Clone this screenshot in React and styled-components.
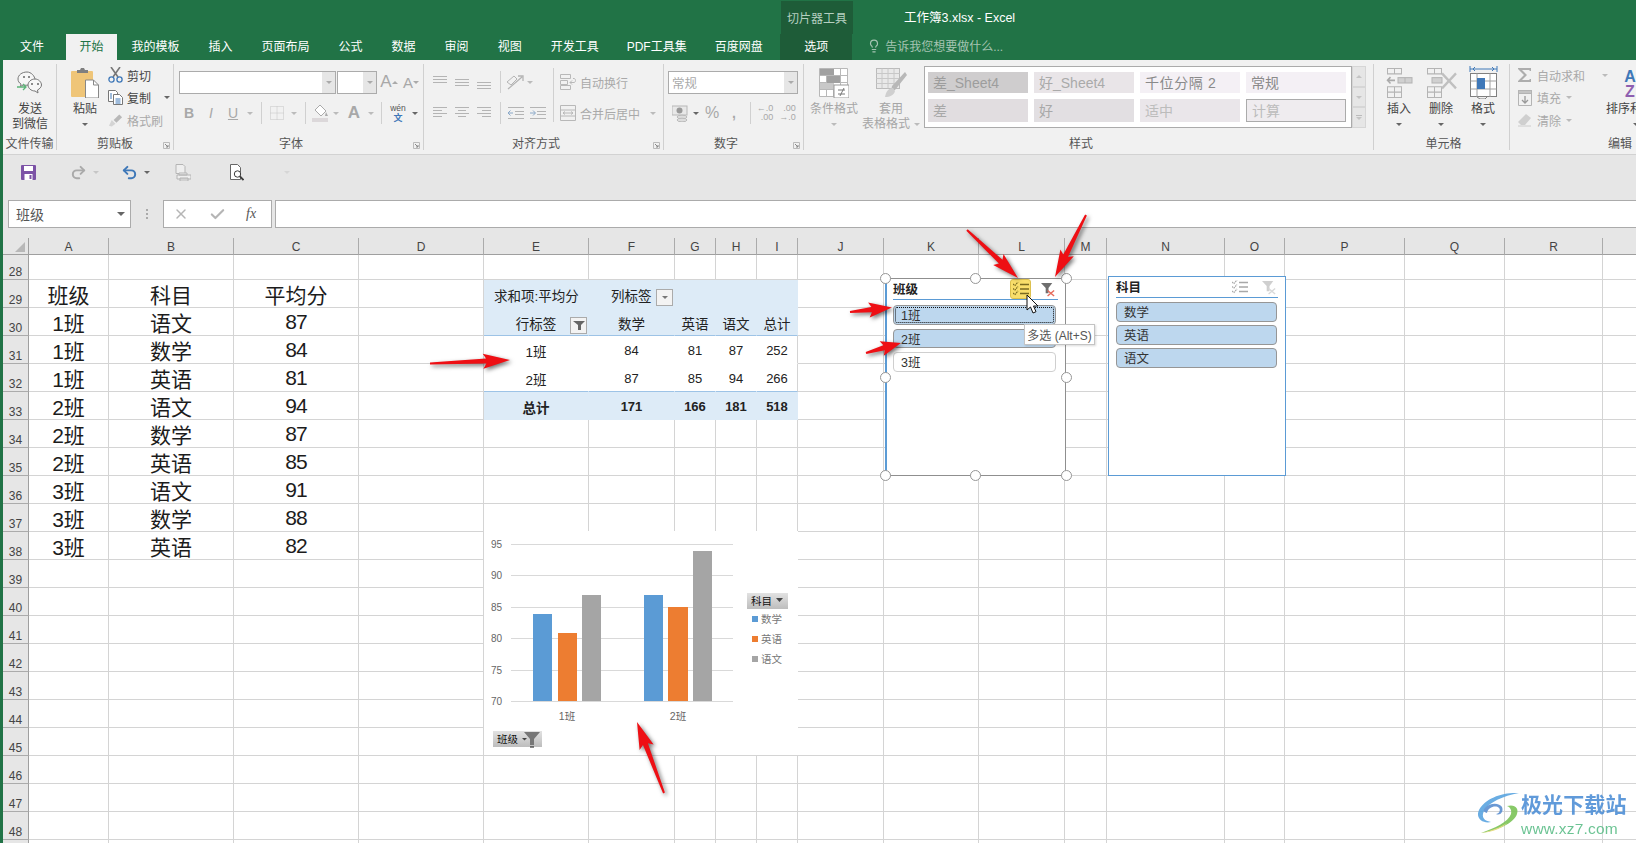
import React from 'react';
import styled, { createGlobalStyle } from 'styled-components';
import { Undo2, Redo2, X, Check, Lightbulb } from 'lucide-react';

const Global = createGlobalStyle`
  html, body { margin: 0; padding: 0; overflow: hidden; background: #fff; }
  * { box-sizing: border-box; }
  body { font-family: "Liberation Sans", "Noto Sans CJK SC", sans-serif; font-size: 12px; color: #444; }
`;

const Root = styled.div`
  position: relative; width: 1636px; height: 843px; overflow: hidden;
  padding-left: 3px; background: #217346;
`;
const TitleBar = styled.header`height: 60px; margin-left: -3px; padding-left: 3px; background: #217346; color: #fff;`;
const TitleRow = styled.div`display: flex; height: 34px; padding-top: 1px;`;
const ContextLabel = styled.div`
  margin-left: 778px; width: 72px; background: #1e5c38; color: #b5cfc0;
  display: flex; align-items: center; justify-content: center; padding-bottom: 1px;
`;
const DocTitle = styled.div`margin-left: 51px; display: flex; align-items: center; color: #fff; font-size: 12.5px; white-space: nowrap; padding-bottom: 2px;`;
const TabRow = styled.nav`display: flex; height: 26px;`;
const Tab = styled.div`
  display: flex; align-items: center; white-space: nowrap; padding: 0 ${p => (p.$active ? 13.5 : p.$pad || 14.5)}px 3px;
  color: ${p => (p.$active ? '#217346' : '#fff')};
  background: ${p => (p.$active ? '#f1f1f1' : 'transparent')};
`;
const FileTab = styled(Tab)`padding: 0 22px 3px 17px;`;
const ContextTab = styled(Tab)`margin-left: 3px; padding: 0 24px 3px; background: #1e5c38;`;
const TellMe = styled.div`margin-left: 15px; display: flex; align-items: center; gap: 4px; color: #a5c4b2; white-space: nowrap; padding-bottom: 3px;`;

const Ribbon = styled.section`display: flex; height: 95px; background: #f1f1f1; border-bottom: 1px solid #d2d2d2; padding-top: 4px; overflow: hidden;`;
const Group = styled.div`
  position: relative; flex: none; width: ${p => p.$w}px; height: 86px; display: flex; flex-direction: column;
  border-right: ${p => (p.$last ? 'none' : '1px solid #d0d0d0')};
`;
const GroupBody = styled.div`display: flex; height: 70px; padding-left: ${p => p.$pl || 0}px;`;
const GroupLabel = styled.div`
  height: 16px; display: flex; align-items: center; justify-content: center; color: #555; white-space: nowrap;
  padding: 0 ${p => p.$pr || 0}px 0 ${p => p.$pl || 0}px;
`;
const Launcher = styled.svg`position: absolute; right: 3px; bottom: 1px; width: 7px; height: 7px;`;

const BigBtn = styled.div`
  flex: none; width: ${p => p.$w}px; padding-top: 2px; display: flex; flex-direction: column; align-items: center;
  color: ${p => (p.$off ? '#a6a6a6' : '#444')}; line-height: 15px; white-space: nowrap;
`;
const IconSlot = styled.div`height: 36px; padding-bottom: 3px; display: flex; align-items: center; justify-content: center;`;
const BigLine = styled.div`height: 15px; display: flex; align-items: center; gap: 4px;`;
const Caret = styled.span`
  flex: none; display: inline-block; width: 0; height: 0;
  border-left: ${p => p.$s || 3}px solid transparent; border-right: ${p => p.$s || 3}px solid transparent;
  border-top: ${p => p.$s || 3}px solid ${p => p.$c || '#666'};
`;
const CaretUp = styled(Caret)`border-top: none; border-bottom: ${p => p.$s || 3}px solid ${p => p.$c || '#666'};`;
const SmallCol = styled.div`flex: none; width: ${p => p.$w}px; margin-left: ${p => p.$ml || 0}px; display: flex; flex-direction: column;`;
const SmallRow = styled.div`
  height: 22.5px; display: flex; align-items: center; gap: ${p => p.$gap || 4}px; white-space: nowrap;
  color: ${p => (p.$off ? '#a9a9a9' : '#444')};
`;
const IcoBox = styled.span`flex: none; width: 15px; display: inline-flex; justify-content: center;`;
const Spacer = styled.span`flex: none; width: ${p => p.$w}px;`;

const ToolStack = styled.div`display: flex; flex-direction: column; gap: 9px; padding-top: 7px;`;
const ToolRow = styled.div`display: flex; align-items: center; height: 22px; white-space: nowrap; margin-left: ${p => p.$ml || 0}px;`;
const Tool = styled.span`
  flex: none; width: ${p => p.$w}px; display: inline-flex; align-items: center; justify-content: center;
  color: #a8a8a8; font-size: ${p => p.$fs || 13}px; font-weight: ${p => (p.$b ? 700 : 400)}; font-style: ${p => (p.$i ? 'italic' : 'normal')};
  text-decoration: ${p => (p.$u ? 'underline' : 'none')};
`;
const Stacked = styled.span`display: flex; flex-direction: column; align-items: flex-end; line-height: 9px; font-size: 9px; color: #a8a8a8;`;
const Sep = styled.span`flex: none; width: ${p => p.$w || 10}px; height: 22px; display: flex; justify-content: center;
  &::after { content: ''; width: 1px; background: #d0d0d0; }`;
const FullSep = styled.div`flex: none; width: 8px; margin-top: 4px; height: 54px; display: flex; justify-content: center;
  &::after { content: ''; width: 1px; background: #d0d0d0; }`;
const Combo = styled.div`
  flex: none; width: ${p => p.$w}px; height: 23px; background: #fff; border: 1px solid #ababab; display: flex;
  margin-right: ${p => p.$mr || 0}px; color: #aaa; font-size: 12.5px;
`;
const ComboText = styled.div`flex: 1; padding-left: 3px; display: flex; align-items: center;`;
const ComboDrop = styled.div`width: 13px; background: #e6e6e6; display: flex; align-items: center; justify-content: center;`;
const WideText = styled.span`font-size: 12px; color: #a9a9a9; margin-left: 4px;`;

const Gallery = styled.div`
  flex: none; width: 428px; height: 62px; margin: 2px 0 0 4px; background: #fff; border: 1px solid #ababab;
  display: grid; grid-template-columns: repeat(4, 100px); gap: 6px; padding: 5px 3px; 
`;
const Style = styled.div`
  background: ${p => p.$bg}; color: ${p => p.$c}; font-size: 14px; padding-left: 5px; display: flex; align-items: center;
  white-space: nowrap; border: ${p => (p.$box ? '1px solid #ababab' : 'none')}; letter-spacing: ${p => (p.$sp ? '0.6px' : 0)};
  padding-bottom: 1px;
`;
const GalleryScroll = styled.div`flex: none; width: 14px; height: 62px; margin-top: 2px; display: flex; flex-direction: column;`;
const ScrollBtn = styled.div`flex: 1; background: #e6e6e6; border: 1px solid #d6d6d6; display: flex; align-items: center; justify-content: center; gap: 1px; flex-direction: column;`;
const Bar = styled.i`display: block; width: 6px; height: 1px; background: #bbb;`;

const Qat = styled.div`height: 45px; background: #e6e6e6; display: flex; align-items: center; padding-bottom: 10px;`;
const QatBtn = styled.span`flex: none; margin-left: ${p => p.$ml}px; display: inline-flex; align-items: center; color: ${p => p.$c || '#aaa'};`;

const FormulaArea = styled.div`height: 38px; background: #e6e6e6; display: flex; align-items: flex-start; padding-left: 5px;`;
const NameBox = styled.div`
  flex: none; width: 123px; height: 28px; background: #fff; border: 1px solid #ababab; display: flex; align-items: center;
  justify-content: space-between; padding: 0 5px 0 7px; font-size: 14px; color: #555;
`;
const Dots = styled.div`flex: none; width: 32px; height: 28px; display: flex; flex-direction: column; gap: 2px; align-items: center; justify-content: center;`;
const Dot = styled.i`width: 2px; height: 2px; background: #aaa; display: block;`;
const FxBox = styled.div`
  flex: none; width: 109px; height: 28px; background: #fff; border: 1px solid #ababab; display: flex; align-items: center; gap: 20px;
  color: #b5b5b5; padding: 0 0 0 9px;
`;
const FxText = styled.span`font-family: "Liberation Serif", serif; font-style: italic; color: #555; font-size: 14px;`;
const FormulaInput = styled.div`flex: 1; height: 28px; margin-left: 3px; background: #fff; border: 1px solid #ababab; border-right: none;`;

const Sheet = styled.div`
  display: grid; background: #fff; margin-left: 0; height: 605px; width: 1660px; overflow: hidden;
  grid-template-columns: 26px ${p => p.$cols};
  grid-template-rows: 17px 25px repeat(21, 28px);
`;
const Corner = styled.div`background: #e6e6e6; border-right: 1px solid #9f9f9f; border-bottom: 1px solid #9f9f9f; display: flex; align-items: flex-end; justify-content: flex-end; padding: 0 3px 2px 0;`;
const ColHead = styled.div`
  background: #e6e6e6; border-right: 1px solid #ababab; border-bottom: 1px solid #9f9f9f; color: #444;
  display: flex; align-items: flex-end; justify-content: center; line-height: 13px;
`;
const RowHead = styled.div`
  background: #e6e6e6; border-right: 1px solid #9f9f9f; border-bottom: 1px solid #ababab; color: #444;
  display: flex; align-items: flex-end; justify-content: center; line-height: 13px;
`;
const pivotBg = { head: '#ddebf7', total: '#ddebf7', body: '#fff' };
const Cell = styled.div`
  position: relative; min-width: 0; display: flex; align-items: center; white-space: nowrap;
  justify-content: ${p => (p.$left != null ? 'flex-start' : 'center')};
  padding-left: ${p => p.$left || 0}px;
  background: ${p => (p.$pivot ? pivotBg[p.$pivot] : '#fff')};
  border-right: 1px solid ${p => (p.$pivot && !p.$edge ? pivotBg[p.$pivot] : (p.$pivot === 'head' || p.$pivot === 'total' ? pivotBg[p.$pivot] : '#d4d4d4'))};
  border-bottom: 1px solid ${p => (p.$rule ? '#9dc3e6' : (p.$pivot ? pivotBg[p.$pivot] : '#d4d4d4'))};
  font-size: ${p => (p.$pivot ? '13.5px' : '21px')};
  font-weight: ${p => (p.$bold ? 700 : 400)};
  color: ${p => (p.$pivot ? '#222' : '#1c1c1c')};
  padding-top: ${p => (p.$pivot ? '2px' : '0')};
`;
const Digits = styled.span`letter-spacing: -1px;`;
const PivotDigits = styled.span`font-size: 13px;`;
const PivotButton = styled.div`
  position: absolute; right: 1px; top: 9px; width: 17px; height: 17px; background: #f3f3f3; border: 1px solid #ababab;
  display: flex; align-items: center; justify-content: center;
`;

const ChartBox = styled.svg`position: absolute; left: 484px; top: 531px; width: 314px; height: 224px; background: #fff; display: block;`;

const Slicer = styled.div`
  position: absolute; left: ${p => p.$x}px; top: ${p => p.$y}px; width: ${p => p.$w}px; height: ${p => p.$h}px;
  background: #fff; padding: 0 7px 0 ${p => (p.$sel ? 6 : 7)}px; display: flex; flex-direction: column;
  border: 1px solid ${p => (p.$sel ? '#8f8f8f' : '#5b9bd5')};
  border-left-color: #5b9bd5; border-left-width: ${p => (p.$sel ? 2 : 1)}px;
`;
const SlicerHead = styled.div`
  height: ${p => p.$h}px; flex: none; display: flex; align-items: center; border-bottom: 1.5px solid #5b9bd5;
  font-size: 12.5px; font-weight: 700; color: #222;
`;
const SlicerTitle = styled.span`flex: 1; padding-bottom: 2px;`;
const HeadBtn = styled.span`
  flex: none; width: ${p => p.$w}px; height: ${p => p.$hh}px; display: flex; align-items: center; justify-content: center;
  margin-right: ${p => p.$mr || 0}px; border-radius: 3px; background: ${p => (p.$on ? '#f9de6a' : 'transparent')};
  border: ${p => (p.$on ? '1px solid #dcc04f' : 'none')};
`;
const SlicerItems = styled.div`display: flex; flex-direction: column; gap: ${p => p.$gap}px; margin-top: ${p => p.$mt}px; margin-right: ${p => p.$mr}px;`;
const SlicerItem = styled.div`
  position: relative; height: 19.5px; border-radius: 4px; padding-left: 7px; display: flex; align-items: center; font-size: 12.5px; color: #333;
  background: ${p => (p.$on ? '#bdd7ee' : '#fff')}; border: 1px solid ${p => (p.$on ? '#969696' : '#cfcfcf')};
`;
const FocusRing = styled.i`position: absolute; inset: 1px; border: 1px dotted #111; border-radius: 2px;`;
const Handle = styled.i`
  position: absolute; left: ${p => p.$x - 5.5}px; top: ${p => p.$y - 5.5}px; width: 11px; height: 11px; border-radius: 50%;
  background: #fff; border: 1.5px solid #969696; display: block;
`;
const Tip = styled.div`
  position: absolute; left: 1024px; top: 324px; width: 71px; height: 21px; background: #fff; border: 1px solid #c4c4c4;
  box-shadow: 1px 1px 2px rgba(0,0,0,.15); display: flex; align-items: center; justify-content: center; font-size: 12px; color: #555; white-space: nowrap;
`;
const Overlay = styled.svg`position: absolute; left: 0; top: 0; width: 1636px; height: 843px; pointer-events: none; filter: drop-shadow(2px 2px 2px rgba(0,0,0,.55));`;
const CursorSvg = styled.svg`position: absolute; left: 1026px; top: 294px; width: 14px; height: 20px;`;
const Mark = styled.div`position: absolute; left: 1477px; top: 792px; display: flex; gap: 1px; opacity: .9;`;
const MarkText = styled.div`display: flex; flex-direction: column;`;
const MarkName = styled.div`font-size: 21px; font-weight: 700; color: #4f90d6; line-height: 26px; letter-spacing: .1px; white-space: nowrap;`;
const MarkUrl = styled.div`font-size: 15.5px; color: #5cbd88; line-height: 18px; margin-top: 2px; white-space: nowrap; letter-spacing: .2px;`;

/* ---------- drawings ---------- */
const g = '#b4b4b4';
const Launch = () => (
  <Launcher viewBox="0 0 7 7"><path d="M.5.5h6v6h-6z" fill="none" stroke="#bbb" /><path d="M2 2l3 3M5 3v2H3" fill="none" stroke="#888" /></Launcher>
);
const Wechat = () => (
  <svg width="28" height="24" viewBox="0 0 28 24" fill="#f6f6f6" stroke="#777">
    <path d="M11 1c-5 0-9 3-9 7 0 2 1 4 3 5l-.5 2.500L7 14c5 1 11-1 12-5 0-4-4-8-8-8z" />
    <path d="M19 8c-4 0-7 3-7 6s3 6 7 6l3 2-.5-3c2-1 4-3 4-5 0-3-3-6-6.500-6z" />
    <g fill="#666" stroke="none"><circle cx="8" cy="6" r="1" /><circle cx="13" cy="6" r="1" /><circle cx="16" cy="13" r="1" /><circle cx="22" cy="13" r="1" /></g>
    <path d="M1 16h9M7 13l3 3-3 3" fill="none" stroke="#5cb478" strokeWidth="1.300" />
  </svg>
);
const Paste = () => (
  <svg width="29" height="31" viewBox="0 0 29 31">
    <rect x="0" y="4" width="22" height="26" rx="1" fill="#efc578" />
    <path d="M6 6V3h3l1-2h3l1 2h3v3z" fill="#7f7f7f" />
    <path d="M14.500 13h8l5 5v13h-13z" fill="#fff" stroke="#888" />
    <path d="M22.500 13v5h5" fill="none" stroke="#888" />
  </svg>
);
const Scissor = () => (
  <svg width="15" height="16" viewBox="0 0 15 16" fill="none">
    <path d="M3 0l7 10M12 0L5 10" stroke="#777" strokeWidth="1.600" />
    <circle cx="3.500" cy="12.500" r="2.600" stroke="#3f78b8" strokeWidth="1.300" /><circle cx="11.500" cy="12.500" r="2.600" stroke="#3f78b8" strokeWidth="1.300" />
  </svg>
);
const CopyIco = () => (
  <svg width="15" height="15" viewBox="0 0 15 15" fill="#fff" stroke="#777">
    <path d="M.5.5h7l2 2v9h-9z" /><path d="M5.500 4.500h6l3 3v7h-9z" />
    <path d="M2 4h2M2 6h2M2 8h2M7.500 9h5M7.500 11h5M7.500 13h5" stroke="#3f78b8" fill="none" />
  </svg>
);
const Brush = () => (
  <svg width="16" height="15" viewBox="0 0 16 15"><path d="M1 13l3-6 4 4-4 3z" fill="#d4d4d4" /><path d="M6 7l6-6 3 3-6 6z" fill="#b8b8b8" /></svg>
);
const GridIco = ({ w = 30, h = 30, cols = 4, rows = 4, c = '#b8b8b8', children }) => {
  const cw = w / cols; const rh = h / rows; const d = [];
  for (let i = 0; i <= cols; i += 1) d.push(`M${i * cw + 0.5} .5V${h + 0.5}`);
  for (let i = 0; i <= rows; i += 1) d.push(`M.5 ${i * rh + 0.5}H${w + 0.5}`);
  return <svg width={w + 2} height={h + 2} viewBox={`0 0 ${w + 2} ${h + 2}`}><rect x=".5" y=".5" width={w} height={h} fill="#fff" /><path d={d.join('')} stroke={c} fill="none" />{children}</svg>;
};
const CondFmt = () => (
  <GridIco w={28} h={28} cols={4} rows={4}>
    <rect x="1" y="1" width="14" height="6" fill="#a0a0a0" /><rect x="8" y="8" width="13" height="7" fill="#a0a0a0" /><rect x="1" y="15" width="14" height="6" fill="#c8c8c8" />
    <rect x="15" y="17" width="15" height="13" fill="#fff" stroke="#999" /><path d="M19 22h7M19 26h7M25 20l-4 8" stroke="#777" fill="none" />
  </GridIco>
);
const TableFmt = () => (
  <svg width="31" height="31" viewBox="0 0 31 31">
    <g transform="translate(0 1)"><rect x=".5" y=".5" width="23" height="20" fill="#e9e9e9" stroke="#bbb" />
      <path d="M6 .5v20M12 .5v20M18 .5v20M.5 5.500h23M.5 10.500h23M.5 15.500h23" stroke="#c8c8c8" fill="none" /></g>
    <path d="M29 5l2 3-12 15-4 1 1-5z" fill="#b8b8b8" /><path d="M9 30c1-6 4-9 8-9l2 3c-1 4-5 6-10 6z" fill="#cfcfcf" />
  </svg>
);
const InsertIco = () => (
  <svg width="27" height="30" viewBox="0 0 27 28" preserveAspectRatio="none" fill="none" stroke="#b4b4b4">
    <path d="M1.500.5h14v5h-14zM8.500.500v5M1.500 17.500h14v10h-14zM8.500 17.500v10M1.500 22.500h14" />
    <rect x="12" y="9" width="14" height="5" fill="#d0d0d0" /><path d="M19 9v5" />
    <path d="M9 11.500H2M4.500 8.500l-3 3 3 3" strokeWidth="1.500" stroke="#aaa" />
  </svg>
);
const DeleteIco = () => (
  <svg width="31" height="30" viewBox="0 0 31 28" preserveAspectRatio="none" fill="none" stroke="#b4b4b4">
    <path d="M1.500.5h14v5h-14zM8.500.500v5M1.500 17.500h14v10h-14zM8.500 17.500v10M1.500 22.500h14" />
    <rect x="6" y="9" width="10" height="5" fill="#d0d0d0" />
    <path d="M16 5l14 14M30 5L16 19" strokeWidth="2.400" stroke="#c0c0c0" />
  </svg>
);
const FormatIco = () => (
  <svg width="29" height="33" viewBox="0 0 29 33" fill="none">
    <path d="M1 3h27M1 0v6M28 0v6M6 1L4 3l2 2M23 1l2 2-2 2" stroke="#3f78b8" />
    <rect x="1.500" y="7.500" width="26" height="23" fill="#fff" stroke="#808080" />
    <path d="M1.500 15h26M1.500 23h26M8 7.500V31M21 7.500V31" stroke="#a0a0a0" />
    <rect x="8" y="12" width="8" height="11" fill="#3f78b8" />
    <path d="M8 31l3 2h5l2-2" stroke="#808080" />
  </svg>
);
const Lines = ({ list, w = 15, h = 14, c = g }) => (
  <svg width={w} height={h} viewBox={`0 0 ${w} ${h}`}>{list.map(([a, b, y]) => <path key={`${a}-${y}`} d={`M${a} ${y + 0.5}H${b}`} stroke={c} />)}</svg>
);
const Orientation = () => (
  <svg width="20" height="18" viewBox="0 0 20 18" fill="none" stroke="#b4b4b4"><path d="M2 9l7-6 3 3-6 6zM8 12l4-4" /><path d="M3 16L17 4M13 3h5v5" strokeWidth="1.300" /></svg>
);
const Indent = ({ flip }) => (
  <svg width="16" height="12" viewBox="0 0 16 12" fill="none" stroke="#b4b4b4">
    <path d="M0 .5h16M7 4.500h9M7 7.500h9M0 11.500h16" />
    <path d={flip ? 'M0 6h5M3 3.500L5.500 6 3 8.500' : 'M5 6H0M2.500 3.500L0 6l2.500 2.500'} stroke="#8aa8c8" />
  </svg>
);
const WrapIco = () => (
  <svg width="16" height="16" viewBox="0 0 16 16" fill="none" stroke="#b8b8b8"><path d="M.5.5h10v4h-10zM.5 6.500h7v4h-7zM.5 11.500h10v4h-10zM10 8.500h4c2 0 2-4 0-4h-1" /><path d="M12 6.500l-2 2 2 2" /></svg>
);
const MergeIco = () => (
  <svg width="16" height="16" viewBox="0 0 16 16" fill="none" stroke="#b8b8b8"><path d="M.5.5h15v15H.5zM.5 5h15M.5 11h15M3 8h10M5 6.500L3 8l2 1.500M11 6.500L13 8l-2 1.500" /></svg>
);
const Currency = () => (
  <svg width="16" height="17" viewBox="0 0 16 17"><rect x="0" y="1" width="15" height="9" fill="#e8e8e8" stroke="#b8b8b8" /><circle cx="7.500" cy="5.500" r="3" fill="#999" /><ellipse cx="10" cy="12" rx="5" ry="1.800" fill="#ddd" stroke="#bbb" /><ellipse cx="10" cy="15" rx="5" ry="1.800" fill="#ddd" stroke="#bbb" /></svg>
);
const BorderIco = () => (
  <svg width="14" height="14" viewBox="0 0 14 14" fill="none" stroke="#c4c4c4" strokeDasharray="1 1"><path d="M.5.5h13v13H.5zM7 .5v13M.5 7h13" /></svg>
);
const FillIco = () => (
  <svg width="17" height="19" viewBox="0 0 17 19"><path d="M8 1l6 6-5 5-6-6z" fill="#fff" stroke="#aaa" /><path d="M14 8l2 4h-3z" fill="#aaa" /><rect x="0" y="14" width="16" height="4" fill="#dcd8da" /></svg>
);
const SaveIco = () => (
  <svg width="15" height="15" viewBox="0 0 15 15"><rect width="15" height="15" rx="1" fill="#7c52a6" /><rect x="3" y="1" width="9" height="5" fill="#fff" /><rect x="3.500" y="9" width="8" height="6" fill="#fff" /><rect x="8.500" y="10" width="2" height="4" fill="#7c52a6" /></svg>
);
const PrintIco = () => (
  <svg width="16" height="17" viewBox="0 0 16 17" fill="#eee" stroke="#b4b4b4"><path d="M1 .5h7l2 2v7H1z" /><path d="M4 9h8v2H4zM2 11h14v4H2zM5 14h8v3H5z" /></svg>
);
const PreviewIco = () => (
  <svg width="14" height="17" viewBox="0 0 14 17" fill="#fff" stroke="#666"><path d="M.5.5h7l3 3v12H.500z" /><circle cx="7.500" cy="10" r="3.200" stroke="#3d3d3d" /><path d="M10 12.500l3.500 3.500" strokeWidth="1.800" stroke="#3d3d3d" /></svg>
);
const Check3 = ({ c = '#777' }) => (
  <svg width="16" height="14" viewBox="0 0 16 14" fill="none" stroke={c}>
    <path d="M7 2.500h9M7 7h9M7 11.500h9" strokeWidth="1.300" />
    <path d="M0 2l2 1.500L5 0M0 6.500L2 8l3-3.500M0 11l2 1.500L5 9" strokeDasharray="1.500 .7" strokeWidth="1.200" />
  </svg>
);
const ClearFilter = ({ dim }) => (
  <svg width="15" height="15" viewBox="0 0 16 16">
    <path d="M0 1h12L8 6.500V12H5V6.500z" fill={dim ? '#cfcfcf' : '#6e6e6e'} />
    <path d="M7 9l7 6M14 9l-7 6" stroke={dim ? '#d9d9d9' : '#e66a5a'} strokeWidth="1.500" />
  </svg>
);
const Funnel = () => (
  <svg width="12" height="11" viewBox="0 0 12 11"><path d="M0 1h12L8 5v5H5V5z" fill="#666" /></svg>
);
const Arrow = ({ from: [x1, y1], to: [x2, y2] }) => {
  const dx = x2 - x1; const dy = y2 - y1; const l = Math.hypot(dx, dy);
  const ux = dx / l; const uy = dy / l; const nx = -uy; const ny = ux;
  const P = (back, side) => `${(x2 - ux * back + nx * side).toFixed(1)},${(y2 - uy * back + ny * side).toFixed(1)}`;
  const head = Math.min(27, l * 0.55);
  const pts = [P(l, 1), P(head * 0.88, 2.6), P(head, 7.5), P(0, 0), P(head, -7.5), P(head * 0.88, -2.6), P(l, -1)];
  return <polygon points={pts.join(' ')} fill="#ee0f14" />;
};
function WenIcon() {
  return (
    <svg width="20" height="20" viewBox="0 0 20 20">
      <text x="10" y="8" fontSize="8.500" fill="#555" textAnchor="middle">wén</text>
      <text x="10" y="18" fontSize="9" fontWeight="700" fill="#3f78b8" textAnchor="middle">文</text>
    </svg>
  );
}
function SigmaIcon() {
  return <svg width="15" height="16" viewBox="0 0 15 16"><path d="M1 1h13v3h-1l-1-1H5l5 5-5 5h7l1-1h1v3H1v-1l6-6-6-6z" fill="#adadad" /></svg>;
}
function FillDown() {
  return <svg width="14" height="16" viewBox="0 0 14 16" fill="none" stroke="#b4b4b4"><path d="M.5.5h13v15H.5z" /><rect x=".5" y=".5" width="13" height="3" fill="#c4c4c4" /><path d="M7 6v7M4 10l3 3 3-3" stroke="#999" strokeWidth="1.300" /></svg>;
}
function Eraser() {
  return <svg width="15" height="14" viewBox="0 0 15 14"><path d="M9 1l5 4-6 7H4L1 9z" fill="#cfcfcf" /><path d="M1 13h13" stroke="#ccc" /></svg>;
}
function SortIcon() {
  return (
    <svg width="30" height="30" viewBox="0 0 30 30">
      <text x="9" y="14" fontSize="16" fontWeight="700" fill="#3f78b8" textAnchor="middle">A</text>
      <text x="9" y="29" fontSize="16" fontWeight="700" fill="#8e5fb0" textAnchor="middle">Z</text>
      <path d="M16 6h12l-6 6z" fill="none" stroke="#777" />
    </svg>
  );
}

/* ---------- data ---------- */
const COLS = [['A', 80], ['B', 125], ['C', 125], ['D', 125], ['E', 105], ['F', 86], ['G', 41], ['H', 41], ['I', 41], ['J', 86], ['K', 95], ['L', 86], ['M', 42], ['N', 118], ['O', 60], ['P', 120], ['Q', 100], ['R', 98], ['S', 100]];
const ROWS = Array.from({ length: 22 }, (_, i) => 28 + i);
const TABLE = [['班级', '科目', '平均分'], ['1班', '语文', '87'], ['1班', '数学', '84'], ['1班', '英语', '81'], ['2班', '语文', '94'], ['2班', '数学', '87'], ['2班', '英语', '85'], ['3班', '语文', '91'], ['3班', '数学', '88'], ['3班', '英语', '82']];
const PIVOT = {
  29: { E: '求和项:平均分', F: '列标签' },
  30: { E: '行标签', F: '数学', G: '英语', H: '语文', I: '总计' },
  31: { E: '1班', F: '84', G: '81', H: '87', I: '252' },
  32: { E: '2班', F: '87', G: '85', H: '94', I: '266' },
  33: { E: '总计', F: '171', G: '166', H: '181', I: '518' },
};
const PIVOT_COLS = 'EFGHI';
const pivotKind = r => (r <= 30 ? 'head' : r === 33 ? 'total' : 'body');

const renderCell = (col, row) => {
  const key = `${col}${row}`;
  if (row >= 29 && row <= 33 && PIVOT_COLS.includes(col)) {
    const left = (row === 29 && col === 'E') ? 10 : (row === 29 && col === 'F') ? 22 : undefined;
    const value = PIVOT[row][col];
    return (
      <Cell key={key} $pivot={pivotKind(row)} $edge={col === 'I'} $rule={row === 30 || row === 32} $bold={row === 33} $left={left}>
        {/^\d+$/.test(value || '') ? <PivotDigits>{value}</PivotDigits> : value}
        {row === 29 && col === 'F' && <PivotButton><Caret $s={3.5} $c="#777" /></PivotButton>}
        {row === 30 && col === 'E' && <PivotButton><Funnel /></PivotButton>}
      </Cell>
    );
  }
  const idx = 'ABC'.indexOf(col);
  const text = idx >= 0 && row >= 29 && row <= 38 ? TABLE[row - 29][idx] : null;
  return <Cell key={key}>{text && (/^\d+$/.test(text) ? <Digits>{text}</Digits> : text)}</Cell>;
};

const Chart = () => {
  const ys = [[95, 544.5], [90, 575.5], [85, 607.5], [80, 638.5], [75, 670.5], [70, 701.5]];
  const bars = [[533, 19, 614, '#5b9bd5'], [558, 19, 633, '#ed7d31'], [582, 19, 595, '#a5a5a5'], [644, 19, 595, '#5b9bd5'], [668, 20, 607, '#ed7d31'], [693, 19, 551, '#a5a5a5']];
  const legend = [['数学', 619, '#5b9bd5'], ['英语', 639, '#ed7d31'], ['语文', 659, '#a5a5a5']];
  return (
    <ChartBox viewBox="484 531 314 224">
      <defs><linearGradient id="btn" x1="0" y1="0" x2="0" y2="1"><stop offset="0" stopColor="#e2e2e2" /><stop offset="1" stopColor="#bdbdbd" /></linearGradient></defs>
      {ys.map(([v, y]) => (
        <g key={v}><path d={`M511 ${y}H733`} stroke="#d9d9d9" /><text x="491" y={y + 3} fontSize="10" fill="#666">{v}</text></g>
      ))}
      {bars.map(([x, w, y, c]) => <rect key={x} x={x} y={y} width={w} height={701 - y} fill={c} />)}
      <text x="567" y="720" fontSize="10.500" fill="#666" textAnchor="middle">1班</text>
      <text x="678" y="720" fontSize="10.500" fill="#666" textAnchor="middle">2班</text>
      <rect x="747" y="593" width="41" height="16" fill="url(#btn)" />
      <text x="751" y="605" fontSize="10.500" fill="#111">科目</text>
      <path d="M776 598h7l-3.500 4z" fill="#444" />
      {legend.map(([t, y, c]) => (
        <g key={t}><rect x="752" y={y - 3} width="6" height="6" fill={c} /><text x="761" y={y + 4} fontSize="10.500" fill="#777">{t}</text></g>
      ))}
      <rect x="493" y="731" width="49" height="16" fill="url(#btn)" />
      <text x="497" y="743" fontSize="10.500" fill="#111">班级</text>
      <path d="M522 738h5l-2.500 2.500z" fill="#444" />
      <path d="M524 732h16l-6 7v6h-4v-6z" fill="#777" />
      <path d="M530 747h4" stroke="#111" />
    </ChartBox>
  );
};

const STYLES = [
  ['差_Sheet4', '#cfcdce', '#9d9d9d'], ['好_Sheet4', '#e9e5e8', '#aaa'], ['千位分隔 2', '#f4f0f5', '#8a8a8a', false, true], ['常规', '#f4f0f5', '#8a8a8a'],
  ['差', '#e1dde0', '#a8a8a8'], ['好', '#e2dfe2', '#a8a8a8'], ['适中', '#eae6ea', '#bcbcbc'], ['计算', '#efecef', '#bcbcbc', true],
];

export default function App() {
  return (
    <Root>
      <Global />
      <TitleBar>
        <TitleRow>
          <ContextLabel>切片器工具</ContextLabel>
          <DocTitle>工作簿3.xlsx - Excel</DocTitle>
        </TitleRow>
        <TabRow>
          <FileTab>文件</FileTab>
          <Tab $active>开始</Tab>
          {['我的模板', '插入', '页面布局', '公式', '数据', '审阅', '视图', '开发工具'].map(t => <Tab key={t}>{t}</Tab>)}
          <Tab $pad={13.5}>PDF工具集</Tab>
          <Tab>百度网盘</Tab>
          <ContextTab>选项</ContextTab>
          <TellMe><Lightbulb size={14} />告诉我您想要做什么...</TellMe>
        </TabRow>
      </TitleBar>

      <Ribbon>
        <Group $w={54}>
          <GroupBody>
            <BigBtn $w={54}><IconSlot><Wechat /></IconSlot><BigLine>发送</BigLine><BigLine>到微信</BigLine></BigBtn>
          </GroupBody>
          <GroupLabel>文件传输</GroupLabel>
        </Group>

        <Group $w={117}>
          <GroupBody $pl={8}>
            <BigBtn $w={40}><IconSlot><Paste /></IconSlot><BigLine>粘贴</BigLine><BigLine><Caret /></BigLine></BigBtn>
            <SmallCol $w={66} $ml={3}>
              <SmallRow><IcoBox><Scissor /></IcoBox>剪切</SmallRow>
              <SmallRow><IcoBox><CopyIco /></IcoBox>复制<Spacer $w={5} /><Caret /></SmallRow>
              <SmallRow $off><IcoBox><Brush /></IcoBox>格式刷</SmallRow>
            </SmallCol>
          </GroupBody>
          <GroupLabel>剪贴板</GroupLabel>
          <Launch />
        </Group>

        <Group $w={250}>
          <GroupBody $pl={4}>
            <ToolStack>
              <ToolRow $ml={1}>
                <Combo $w={157} $mr={1}><ComboText /><ComboDrop><Caret $c="#aaa" /></ComboDrop></Combo>
                <Combo $w={40}><ComboText /><ComboDrop><Caret $c="#aaa" /></ComboDrop></Combo>
                <Tool $w={24} $fs={17}>A<CaretUp $c="#aaa" /></Tool>
                <Tool $w={20} $fs={15}>A<Caret $c="#aaa" /></Tool>
              </ToolRow>
              <ToolRow>
                <Tool $w={22} $b $fs={14}>B</Tool><Tool $w={22} $i $fs={14}>I</Tool><Tool $w={22} $u $fs={14}>U</Tool>
                <Tool $w={12}><Caret $c="#bbb" /></Tool><Sep />
                <Tool $w={22}><BorderIco /></Tool><Tool $w={12}><Caret $c="#bbb" /></Tool><Sep />
                <Tool $w={20}><FillIco /></Tool><Tool $w={12}><Caret $c="#bbb" /></Tool>
                <Tool $w={24} $fs={17} $b>A</Tool><Tool $w={10}><Caret $c="#bbb" /></Tool><Sep />
                <Tool $w={24}><WenIcon /></Tool><Tool $w={10}><Caret /></Tool>
              </ToolRow>
            </ToolStack>
          </GroupBody>
          <GroupLabel $pr={15}>字体</GroupLabel>
          <Launch />
        </Group>

        <Group $w={240}>
          <GroupBody $pl={5}>
            <ToolStack>
              <ToolRow>
                <Tool $w={22}><Lines list={[[0, 14, 1], [0, 14, 4], [0, 14, 7]]} /></Tool>
                <Tool $w={22}><Lines list={[[0, 14, 4], [0, 14, 7], [0, 14, 10]]} /></Tool>
                <Tool $w={22}><Lines list={[[0, 14, 7], [0, 14, 10], [0, 14, 13]]} /></Tool>
                <Sep /><Tool $w={20}><Orientation /></Tool><Tool $w={10}><Caret $c="#bbb" /></Tool>
              </ToolRow>
              <ToolRow>
                <Tool $w={22}><Lines list={[[0, 14, 1], [0, 9, 4], [0, 14, 7], [0, 9, 10]]} /></Tool>
                <Tool $w={22}><Lines list={[[0, 14, 1], [3, 11, 4], [0, 14, 7], [3, 11, 10]]} /></Tool>
                <Tool $w={22}><Lines list={[[0, 14, 1], [5, 14, 4], [0, 14, 7], [5, 14, 10]]} /></Tool>
                <Sep /><Tool $w={22}><Indent /></Tool><Tool $w={22}><Indent flip /></Tool>
              </ToolRow>
            </ToolStack>
            <FullSep />
            <ToolStack>
              <ToolRow><Spacer $w={3} /><WrapIco /><WideText>自动换行</WideText></ToolRow>
              <ToolRow><Spacer $w={3} /><MergeIco /><WideText>合并后居中</WideText><Spacer $w={10} /><Caret $c="#bbb" /></ToolRow>
            </ToolStack>
          </GroupBody>
          <GroupLabel $pr={15}>对齐方式</GroupLabel>
          <Launch />
        </Group>

        <Group $w={140}>
          <GroupBody $pl={4}>
            <ToolStack>
              <ToolRow><Combo $w={130}><ComboText>常规</ComboText><ComboDrop><Caret $c="#aaa" /></ComboDrop></Combo></ToolRow>
              <ToolRow>
                <Tool $w={24}><Currency /></Tool><Tool $w={8}><Caret /></Tool><Tool $w={24} $fs={16}>%</Tool><Tool $w={20} $fs={14} $b>,</Tool>
                <Sep $w={12} />
                <Tool $w={18}><Stacked><span>←.0</span><span>.00</span></Stacked></Tool>
                <Tool $w={27}><Stacked><span>.00</span><span>→.0</span></Stacked></Tool>
              </ToolRow>
            </ToolStack>
          </GroupBody>
          <GroupLabel $pr={15}>数字</GroupLabel>
          <Launch />
        </Group>

        <Group $w={570}>
          <GroupBody $pl={2}>
            <BigBtn $w={56} $off><IconSlot><CondFmt /></IconSlot><BigLine>条件格式</BigLine><BigLine><Caret $c="#bbb" /></BigLine></BigBtn>
            <BigBtn $w={58} $off><IconSlot><TableFmt /></IconSlot><BigLine>套用</BigLine><BigLine>表格格式<Caret $c="#bbb" /></BigLine></BigBtn>
            <Gallery>
              {STYLES.map(([t, bg, c, box, sp]) => <Style key={t} $bg={bg} $c={c} $box={box} $sp={sp}>{t}</Style>)}
            </Gallery>
            <GalleryScroll>
              <ScrollBtn><CaretUp $c="#c4c4c4" /></ScrollBtn>
              <ScrollBtn><Caret $c="#c4c4c4" /></ScrollBtn>
              <ScrollBtn><Bar /><Caret $c="#c4c4c4" /></ScrollBtn>
            </GalleryScroll>
          </GroupBody>
          <GroupLabel $pr={15}>样式</GroupLabel>
        </Group>

        <Group $w={136}>
          <GroupBody $pl={4}>
            <BigBtn $w={42}><IconSlot><InsertIco /></IconSlot><BigLine>插入</BigLine><BigLine><Caret /></BigLine></BigBtn>
            <BigBtn $w={42}><IconSlot><DeleteIco /></IconSlot><BigLine>删除</BigLine><BigLine><Caret /></BigLine></BigBtn>
            <BigBtn $w={42}><IconSlot><FormatIco /></IconSlot><BigLine>格式</BigLine><BigLine><Caret /></BigLine></BigBtn>
          </GroupBody>
          <GroupLabel $pl={4}>单元格</GroupLabel>
        </Group>

        <Group $w={126} $last>
          <GroupBody $pl={7}>
            <SmallCol $w={89}>
              <SmallRow $off $gap={5}><IcoBox><SigmaIcon /></IcoBox>自动求和<Spacer $w={7} /><Caret $c="#bbb" /></SmallRow>
              <SmallRow $off $gap={5}><IcoBox><FillDown /></IcoBox>填充<Caret $c="#bbb" /></SmallRow>
              <SmallRow $off $gap={5}><IcoBox><Eraser /></IcoBox>清除<Caret $c="#bbb" /></SmallRow>
            </SmallCol>
            <BigBtn $w={60}><IconSlot><SortIcon /></IconSlot><BigLine>排序和筛选</BigLine><BigLine><Caret /></BigLine></BigBtn>
          </GroupBody>
          <GroupLabel $pl={94}>编辑</GroupLabel>
        </Group>
      </Ribbon>

      <Qat>
        <QatBtn $ml={18}><SaveIco /></QatBtn>
        <QatBtn $ml={34}><Redo2 size={17} strokeWidth={2.800} /></QatBtn>
        <QatBtn $ml={6}><Caret $c="#c6c6c6" /></QatBtn>
        <QatBtn $ml={22} $c="#3f78b8"><Undo2 size={17} strokeWidth={2.800} /></QatBtn>
        <QatBtn $ml={6}><Caret /></QatBtn>
        <QatBtn $ml={25}><PrintIco /></QatBtn>
        <QatBtn $ml={39}><PreviewIco /></QatBtn>
        <QatBtn $ml={40}><Caret $c="#d6d6d6" /></QatBtn>
      </Qat>

      <FormulaArea>
        <NameBox>班级<Caret $s={4} $c="#666" /></NameBox>
        <Dots><Dot /><Dot /><Dot /></Dots>
        <FxBox><X size={16} strokeWidth={2.200} /><Check size={17} strokeWidth={3} /><FxText>fx</FxText></FxBox>
        <FormulaInput />
      </FormulaArea>

      <Sheet $cols={COLS.map(c => `${c[1]}px`).join(' ')}>
        <Corner><svg width="10" height="10" viewBox="0 0 10 10"><path d="M10 0v10H0z" fill="#b8b8b8" /></svg></Corner>
        {COLS.map(([c]) => <ColHead key={c}>{c}</ColHead>)}
        {ROWS.map(r => (
          <React.Fragment key={r}>
            <RowHead>{r}</RowHead>
            {COLS.map(([c]) => renderCell(c, r))}
          </React.Fragment>
        ))}
      </Sheet>

      <Chart />

      <Slicer $sel $x={885} $y={278} $w={181} $h={198}>
        <SlicerHead $h={21}>
          <SlicerTitle>班级</SlicerTitle>
          <HeadBtn $on $w={21} $hh={20} $mr={9}><Check3 c="#7a6a20" /></HeadBtn>
          <HeadBtn $w={16} $hh={16} $mr={2}><ClearFilter /></HeadBtn>
        </SlicerHead>
        <SlicerItems $gap={4} $mt={5} $mr={2}>
          <SlicerItem $on><FocusRing />1班</SlicerItem>
          <SlicerItem $on>2班</SlicerItem>
          <SlicerItem>3班</SlicerItem>
        </SlicerItems>
      </Slicer>
      <Slicer $x={1108} $y={276} $w={178} $h={200}>
        <SlicerHead $h={21}>
          <SlicerTitle>科目</SlicerTitle>
          <HeadBtn $w={16} $hh={16} $mr={13}><Check3 c="#a8a8a8" /></HeadBtn>
          <HeadBtn $w={16} $hh={16} $mr={1}><ClearFilter dim /></HeadBtn>
        </SlicerHead>
        <SlicerItems $gap={3.500} $mt={4} $mr={1}>
          <SlicerItem $on>数学</SlicerItem>
          <SlicerItem $on>英语</SlicerItem>
          <SlicerItem $on>语文</SlicerItem>
        </SlicerItems>
      </Slicer>

      {[[885, 278.5], [975, 278.5], [1066, 278.5], [885, 377], [1066, 377], [885, 475.5], [975, 475.5], [1066, 475.5]].map(([x, y]) => <Handle key={`${x}-${y}`} $x={x} $y={y} />)}

      <Tip>多选 (Alt+S)</Tip>
      <CursorSvg viewBox="0 0 14 20"><path d="M1 1v15l3.500-3 2.500 6 3-1.300-2.500-5.700H12z" fill="#fff" stroke="#111" strokeWidth="1" /></CursorSvg>

      <Mark>
        <svg width="43" height="42" viewBox="0 0 43 42" fill="none">
          <path d="M42 1C26 0 8 6 2 18c-4 8 4 14 12 12-7-1-10-5-7-11C12 10 26 4 42 1z" fill="#5aa5e0" />
          <path d="M10 21c1-6 9-8 12-5 2 2 0 6-3 6 4 2 8-2 6-7-2-4-12-5-17 1-2 2-2 4 2 5z" fill="#5b8fd0" />
          <path d="M30 14c8-2 12 2 10 8-3 9-18 16-36 19 14-5 27-11 30-19 1-4-1-7-4-8z" fill="#7cc458" />
          <path d="M4 41c10-2 20-6 26-10-4 5-14 9-26 10z" fill="#e6d878" />
        </svg>
        <MarkText>
          <MarkName>极光下载站</MarkName>
          <MarkUrl>www.xz7.com</MarkUrl>
        </MarkText>
      </Mark>

      <Overlay viewBox="0 0 1636 843">
        <Arrow from={[430, 363.500]} to={[510, 360]} />
        <Arrow from={[967, 230]} to={[1018, 278]} />
        <Arrow from={[1086, 215]} to={[1055, 277]} />
        <Arrow from={[850, 312]} to={[892, 307.500]} />
        <Arrow from={[866, 353]} to={[901, 343]} />
        <Arrow from={[664, 793]} to={[637, 722]} />
      </Overlay>
    </Root>
  );
}
